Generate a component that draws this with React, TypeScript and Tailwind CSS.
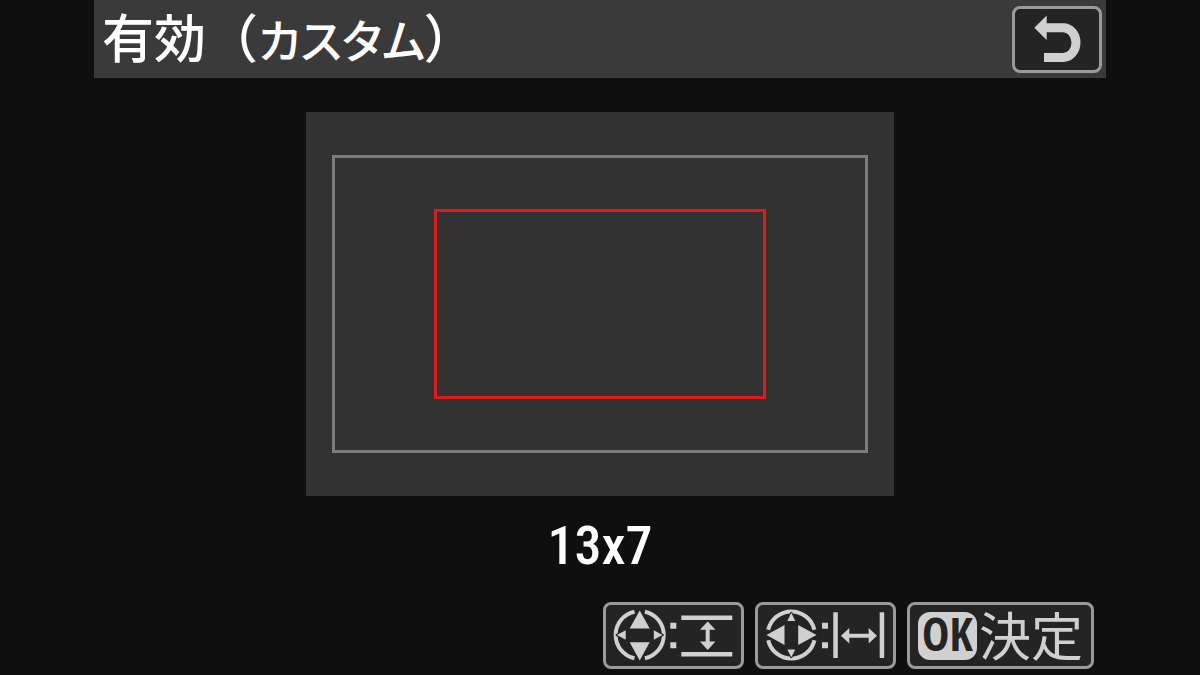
import type { ReactNode } from 'react';

function KeyButton({ label, className, children }: { label: string; className: string; children: ReactNode }) {
  return (
    <button
      type="button"
      aria-label={label}
      className={`flex h-[67px] items-center justify-center rounded-lg border-3 border-[#9a9a9a] bg-[#242424] text-[#d0d0d0] ${className}`}
    >
      {children}
    </button>
  );
}

function BackIcon() {
  return (
    <svg viewBox="0 0 84 61" className="h-[61px] w-[84px]" fill="none">
      <path d="M30 18.700H48A13 14.900 0 0 1 48 48.500H29" stroke="currentColor" strokeWidth="9" />
      <path d="M19.300 18.700L31.700 6.500V31Z" fill="currentColor" />
    </svg>
  );
}

function HeightIcon() {
  return (
    <svg viewBox="0 0 135 61" className="h-[61px] w-[135px]" fill="currentColor">
      <g fill="none" stroke="currentColor" strokeWidth="4">
        <path d="M28.500 6.800A23.700 23.700 0 0 0 28.500 53.200" />
        <path d="M38.900 6.800A23.700 23.700 0 0 1 38.900 53.200" />
      </g>
      <path d="M33.700 5.500L43.700 23.400H23.700Z" />
      <path d="M33.700 55.500L43.700 37.200H23.700Z" />
      <g stroke="#242424" strokeWidth="2.500" strokeLinejoin="round" className="[paint-order:stroke]">
        <path d="M10.800 30L19.700 25.300V34.700Z" />
        <path d="M56.600 30L47.800 25.300V34.700Z" />
      </g>
      <path d="M64.300 17.700h6v6h-6ZM64.300 37.300h6v6h-6Z" />
      <path d="M75.300 10.500h51v4.500h-51ZM75.300 47h51v4.500h-51Z" />
      <path d="M101.700 16.500L109.500 24.800H103.700V36.500H109.500L101.700 45L93.900 36.500H99.700V24.800H93.900Z" />
    </svg>
  );
}

function WidthIcon() {
  return (
    <svg viewBox="0 0 135 61" className="h-[61px] w-[135px]" fill="currentColor">
      <g fill="none" stroke="currentColor" strokeWidth="4">
        <path d="M10.200 24.800A23.700 23.700 0 0 1 56.400 24.800" />
        <path d="M10.200 35.200A23.700 23.700 0 0 0 56.400 35.200" />
      </g>
      <path d="M8.500 30L26.500 20V40Z" />
      <path d="M58.500 30L40.200 20V40Z" />
      <g stroke="#242424" strokeWidth="2" strokeLinejoin="round" className="[paint-order:stroke]">
        <path d="M33.300 7.800L37.300 16H29.300Z" />
        <path d="M33.300 52.200L37.300 44.500H29.300Z" />
      </g>
      <path d="M64 17.700h6v6h-6ZM64 37.300h6v6h-6Z" />
      <path d="M75.300 7.300h4.500v45.700h-4.500ZM121.700 7.300h4.500v45.700h-4.500Z" />
      <path d="M83 30.700L91.300 23V28.700H110.700V23L119 30.700L110.700 38.500V32.700H91.300V38.500Z" />
    </svg>
  );
}

export default function App() {
  return (
    <main
      lang="ja"
      className="min-h-screen bg-[#0f0f0f] font-['Noto_Sans_CJK_JP','Noto_Sans',sans-serif] text-white"
    >
      <div className="mx-auto flex min-h-screen max-w-[1012px] flex-col">
        <header className="flex h-[78px] items-center justify-between bg-[#3a3a3a] pr-1 pl-2">
          <h1 className="pb-1 text-[52px] leading-[74px] font-medium">
            有効（
            <span className="[font-feature-settings:'palt']">
              <span className="text-[46px]">カスタム</span>）
            </span>
          </h1>
          <KeyButton label="戻る" className="w-[90px]">
            <BackIcon />
          </KeyButton>
        </header>

        <section className="flex flex-col items-center pt-[34px]">
          <div className="w-full max-w-[588px] bg-[#323232] px-[26px] py-[43px]">
            <div className="flex h-[298px] items-center justify-center border-3 border-[#7c7c7c]">
              <div className="h-[190px] w-[62.800%] border-3 border-[#e01b1b]" />
            </div>
          </div>
          <p className="mt-3 font-['Roboto_Condensed','Open_Sans_Condensed',sans-serif] text-[54px] leading-[76px] font-medium">
            13x7
          </p>
        </section>

        <footer className="mt-auto flex justify-end gap-[11px] px-3 pb-[6px]">
          <KeyButton label="高さを変更" className="w-[141px]">
            <HeightIcon />
          </KeyButton>
          <KeyButton label="幅を変更" className="w-[141px]">
            <WidthIcon />
          </KeyButton>
          <KeyButton label="OK 決定" className="w-[187px] gap-[2px] text-[52px] leading-[61px]">
            <span className="flex h-12 w-[59px] items-center justify-center rounded-xl bg-[#d0d0d0] pb-1 font-['Open_Sans_Condensed','Roboto_Condensed',sans-serif] text-[46px] font-bold text-[#242424]">
              OK
            </span>
            <span className="pb-1">決定</span>
          </KeyButton>
        </footer>
      </div>
    </main>
  );
}
